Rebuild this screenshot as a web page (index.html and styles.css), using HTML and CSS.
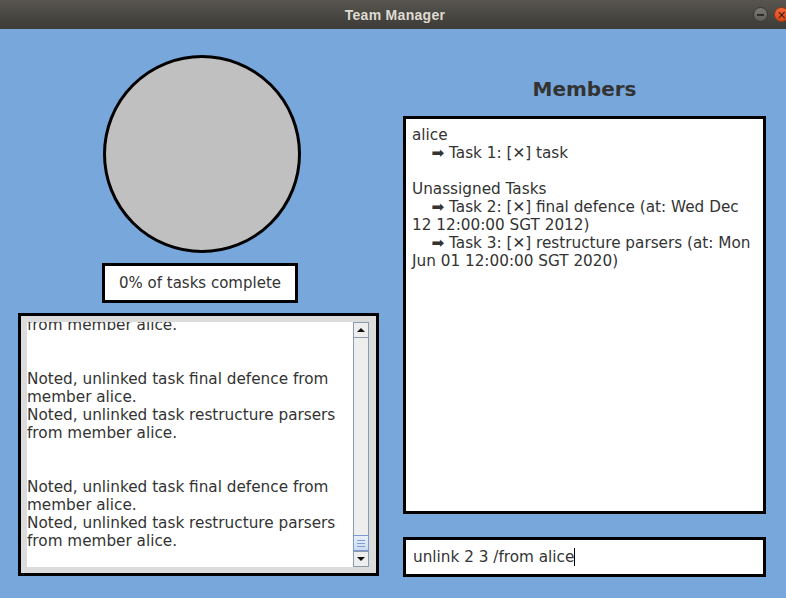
FILE: index.html
```html
<!DOCTYPE html>
<html>
<head>
<meta charset="utf-8">
<title>Team Manager</title>
<link rel="stylesheet" href="styles.css">
</head>
<body>
<div class="window">
  <header class="titlebar">
    <span class="title">Team Manager</span>
    <div class="controls">
      <span class="btn minimize"><span class="dash"></span></span>
      <span class="btn close">×</span>
    </div>
  </header>
  <main class="main">
    <section class="left">
      <div class="pie"></div>
      <div class="progress">0% of tasks complete</div>
      <div class="log">
        <div class="log-inner">
          <div class="log-text"><div class="log-content">from member alice.


Noted, unlinked task final defence from member alice.
Noted, unlinked task restructure parsers from member alice.


Noted, unlinked task final defence from member alice.
Noted, unlinked task restructure parsers from member alice.
</div></div>
          <div class="scrollbar">
            <div class="sb-btn"><span class="tri-up"></span></div>
            <div class="sb-track"></div>
            <div class="sb-thumb"><i></i><i></i><i></i></div>
            <div class="sb-btn"><span class="tri-down"></span></div>
          </div>
        </div>
      </div>
    </section>
    <section class="right">
      <h1 class="heading">Members</h1>
      <div class="members">alice
    ➡ Task 1: [✕] task

Unassigned Tasks
    ➡ Task 2: [✕] final defence (at: Wed Dec 12 12:00:00 SGT 2012)
    ➡ Task 3: [✕] restructure parsers (at: Mon Jun 01 12:00:00 SGT 2020)</div>
      <div class="command"><span class="cmd-text">unlink 2 3 /from alice</span><span class="caret"></span></div>
    </section>
  </main>
</div>
</body>
</html>
```

FILE: styles.css
```css
html, body {
  margin: 0;
  padding: 0;
}

body {
  width: 786px;
  height: 598px;
  overflow: hidden;
  background: #78a7db;
  font-family: "DejaVu Sans", "Liberation Sans", sans-serif;
  color: #333333;
}

.window {
  display: flex;
  flex-direction: column;
  height: 598px;
}

.titlebar {
  height: 29px;
  flex: none;
  background: linear-gradient(#58554f, #3c3b37);
  display: flex;
  align-items: center;
  justify-content: center;
  position: relative;
}

.title {
  font-family: "Liberation Sans", "DejaVu Sans", sans-serif;
  font-weight: bold;
  font-size: 14px;
  letter-spacing: 0.3px;
  color: #dfdbd2;
  margin-left: 4px;
}

.controls {
  position: absolute;
  top: 7px;
  left: 753px;
  display: flex;
  gap: 6px;
}

.btn {
  width: 15px;
  height: 15px;
  border-radius: 50%;
  box-sizing: border-box;
  display: flex;
  align-items: center;
  justify-content: center;
}

.minimize {
  background: linear-gradient(#7a7975, #5f5e5a);
  border: 1px solid #3a3935;
}

.dash {
  width: 7px;
  height: 2px;
  background: #2e2d2a;
}

.close {
  background: linear-gradient(#f26a3c, #d9481b);
  border: 1px solid #a2350f;
  color: #3a1a0c;
  font-family: "DejaVu Sans", sans-serif;
  font-size: 12px;
  line-height: 1;
}

.main {
  flex: 1;
  display: flex;
}

.left {
  width: 361px;
  margin-left: 18px;
  display: flex;
  flex-direction: column;
}

.pie {
  width: 198px;
  height: 198px;
  margin: 26px 0 0 85px;
  box-sizing: border-box;
  border: 3px solid #000;
  border-radius: 50%;
  background: #c0c0c0;
}

.progress {
  width: 196px;
  height: 40px;
  margin: 10px 0 0 84px;
  box-sizing: border-box;
  border: 3px solid #000;
  background: #fff;
  font-size: 15px;
  display: flex;
  align-items: center;
  justify-content: center;
}

.log {
  width: 361px;
  height: 263px;
  margin-top: 10px;
  box-sizing: border-box;
  border: 3px solid #000;
  background: #dcdcdc;
  padding: 6px 7px 6px 6px;
}

.log-inner {
  display: flex;
  height: 100%;
  background: #fff;
}

.log-text {
  flex: 1;
  overflow: hidden;
  font-size: 15.25px;
  line-height: 18px;
  white-space: pre-wrap;
}

.log-content {
  margin-top: -6px;
}

.scrollbar {
  width: 16px;
  flex: none;
  display: flex;
  flex-direction: column;
  background: #eeeeee;
  box-sizing: border-box;
}

.sb-btn {
  height: 16px;
  box-sizing: border-box;
  border: 1px solid #8c9aae;
  background: #eeeeee;
  display: flex;
  align-items: center;
  justify-content: center;
}

.tri-up {
  width: 0;
  height: 0;
  border-left: 4px solid transparent;
  border-right: 4px solid transparent;
  border-bottom: 4px solid #111;
}

.tri-down {
  width: 0;
  height: 0;
  border-left: 4px solid transparent;
  border-right: 4px solid transparent;
  border-top: 4px solid #111;
}

.sb-track {
  flex: 1;
  border-left: 1px solid #8c9aae;
  border-right: 1px solid #8c9aae;
  background: #eeeeee;
}

.sb-thumb {
  height: 16px;
  box-sizing: border-box;
  border: 1px solid #7b9ad2;
  background: linear-gradient(#e8effa, #cddcf3);
  display: flex;
  flex-direction: column;
  align-items: center;
  justify-content: center;
  gap: 2px;
}

.sb-thumb i {
  display: block;
  width: 8px;
  height: 1px;
  background: #7f9bd0;
}

.right {
  width: 363px;
  margin-left: 24px;
  padding-top: 48px;
  display: flex;
  flex-direction: column;
}

.heading {
  margin: 0;
  font-size: 20px;
  line-height: 24px;
  font-weight: bold;
  text-align: center;
  color: #333333;
}

.members {
  margin-top: 15px;
  height: 398px;
  box-sizing: border-box;
  border: 3px solid #000;
  background: #fff;
  padding: 7px 3px 0 6px;
  font-size: 15.25px;
  line-height: 18px;
  white-space: pre-wrap;
}

.command {
  margin-top: 23px;
  height: 40px;
  box-sizing: border-box;
  border: 3px solid #000;
  background: #fff;
  padding-left: 7px;
  display: flex;
  align-items: center;
  font-size: 15.25px;
}

.caret {
  width: 1px;
  height: 18px;
  background: #000;
}
```
